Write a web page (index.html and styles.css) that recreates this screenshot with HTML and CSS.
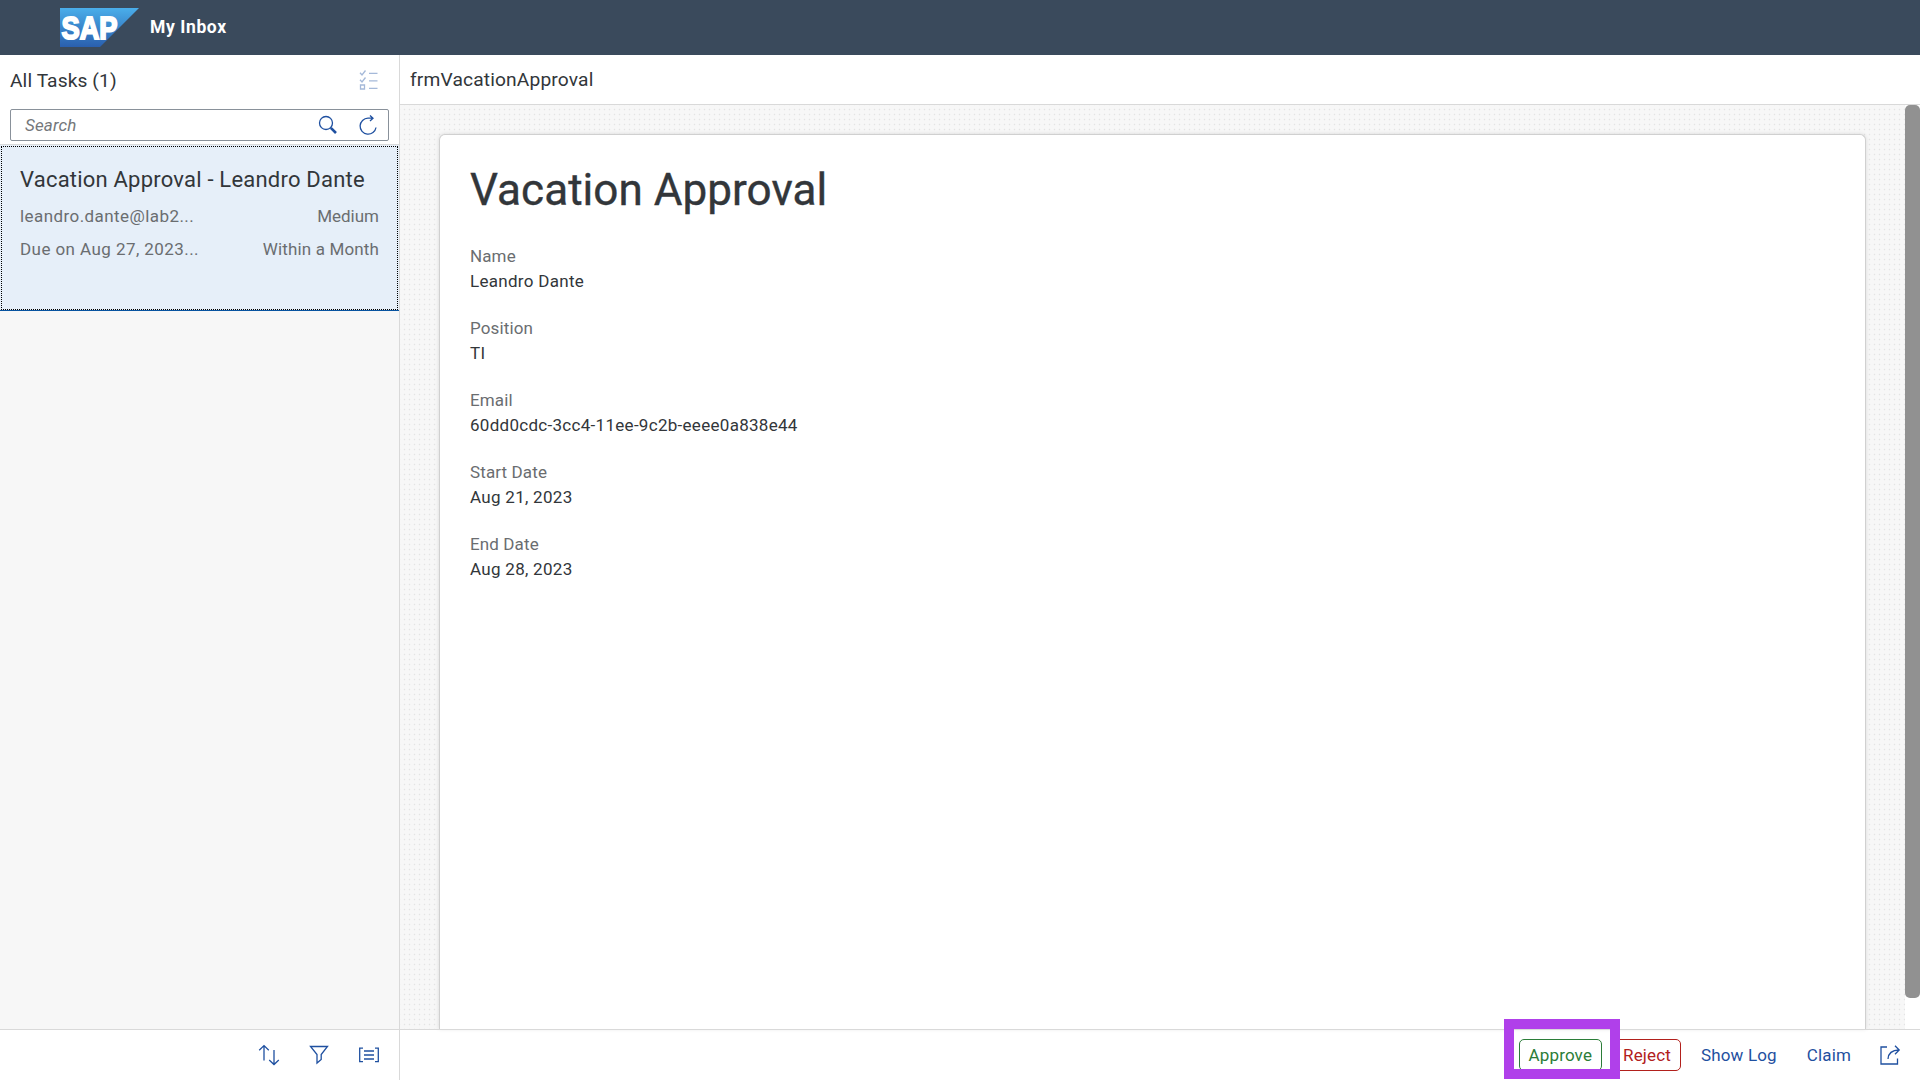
FILE: index.html
```html
<!DOCTYPE html>
<html lang="en">
<head>
<meta charset="utf-8">
<title>My Inbox</title>
<link rel="stylesheet" href="styles.css">
</head>
<body>
<header class="shell">
  <svg class="logo" width="79" height="39" viewBox="0 0 79 39" role="img" aria-label="SAP">
    <defs><linearGradient id="sap" x1="0" y1="0" x2="0" y2="1"><stop offset="0" stop-color="#4aaeea"/><stop offset="1" stop-color="#2a5fae"/></linearGradient></defs>
    <path d="M0 0H79L40 39H0Z" fill="url(#sap)"/>
    <text class="logo-text" x="1.5" y="30.500" textLength="56" lengthAdjust="spacingAndGlyphs">SAP</text>
  </svg>
  <h1 class="shell-title">My Inbox</h1>
</header>
<div class="app">
  <aside class="master">
    <div class="master-head">
      <h2 class="master-title">All Tasks (1)</h2>
      <svg class="icon icon-muted" width="20" height="20" viewBox="0 0 20 20"><path d="M1 2.8 3 5 6.5.5M1 9.8 3 12 6.5 7.5M1.500 15h4v4h-4zM10 3.3h8.500M10 10.8h8.500M10 18.3h8.500"/></svg>
    </div>
    <div class="search">
      <span class="search-hint">Search</span>
      <svg class="icon" width="20" height="20" viewBox="0 0 20 20"><circle cx="8" cy="8" r="6.5"/><path class="thick" d="m12.8 12.8 5.2 5.2"/></svg>
      <svg class="icon" width="20" height="20" viewBox="0 0 20 20"><path d="M15 3.200H10a8 8 0 1 0 8 9.300M12 .5 15 3.2 12 6"/></svg>
    </div>
    <div class="list">
      <div class="task">
        <div class="task-title">Vacation Approval - Leandro Dante</div>
        <div class="task-row"><span class="wide">leandro.dante@lab2...</span><span>Medium</span></div>
        <div class="task-row"><span class="wide">Due on Aug 27, 2023...</span><span class="snug">Within a Month</span></div>
      </div>
    </div>
    <footer class="master-foot">
      <svg class="icon" width="20" height="20" viewBox="0 0 20 20"><path d="M5 15.5V.8M.2 5.2 5 .6 9.8 5.2M15 5v14.5M10.2 15 15 19.5 19.8 15"/></svg>
      <svg class="icon" width="20" height="20" viewBox="0 0 20 20"><path d="M1.5 1.5h17l-6.3 8v5L8 18V9.500Z"/></svg>
      <svg class="icon" width="20" height="20" viewBox="0 0 20 20"><path d="M4 3.200H.7v13.500H4M16 3.200h3.300v13.500H16M5 6h10M5 10h10M5 14h10"/></svg>
    </footer>
  </aside>
  <main class="detail">
    <div class="detail-head">frmVacationApproval</div>
    <div class="detail-body">
      <div class="canvas">
        <section class="card">
          <h2 class="card-title">Vacation Approval</h2>
          <dl class="fields">
            <div class="field"><dt>Name</dt><dd>Leandro Dante</dd></div>
            <div class="field"><dt>Position</dt><dd>TI</dd></div>
            <div class="field"><dt>Email</dt><dd>60dd0cdc-3cc4-11ee-9c2b-eeee0a838e44</dd></div>
            <div class="field"><dt>Start Date</dt><dd>Aug 21, 2023</dd></div>
            <div class="field"><dt>End Date</dt><dd>Aug 28, 2023</dd></div>
          </dl>
        </section>
      </div>
      <div class="track"><div class="thumb"></div></div>
    </div>
    <footer class="detail-foot">
      <div class="approve-wrap"><button class="btn approve">Approve</button><span class="marker"></span></div>
      <button class="btn reject">Reject</button>
      <button class="btn plain">Show Log</button>
      <button class="btn plain">Claim</button>
      <svg class="icon share" width="20" height="20" viewBox="0 0 20 20"><path d="M7 2H1v17h16.500v-5.500M8 14c.3-5 3-8.800 11-9M15 .8 19.200 5 15 9.200"/></svg>
    </footer>
  </main>
</div>
</body>
</html>
```
FILE: styles.css
```css
* { box-sizing: border-box; }
body {
  margin: 0;
  height: 100vh;
  display: flex;
  flex-direction: column;
  overflow: hidden;
  font-family: Roboto, "Liberation Sans", sans-serif;
  font-size: 17px;
  color: #32363a;
  background: #fff;
}
h1, h2, dl, dd { margin: 0; font-weight: 400; }

.shell {
  flex: 0 0 55px;
  display: flex;
  align-items: center;
  gap: 11px;
  padding-left: 60px;
  background: #3a4a5c;
}
.logo { display: block; }
.logo-text { font-family: "Liberation Sans", sans-serif; font-weight: 700; font-size: 32px; fill: #fff; stroke: #fff; stroke-width: 2px; }
.shell-title { font-size: 17.5px; font-weight: 700; letter-spacing: .6px; padding-bottom: 2px; color: #fff; }

.app { flex: 1; display: flex; min-height: 0; }

.icon { flex: none; fill: none; stroke: #1f50a0; stroke-width: 1.3; overflow: visible; }
.icon-muted { stroke: #a5b9d9; }
.thick { stroke-width: 2.6; }

.master { flex: 0 0 400px; display: flex; flex-direction: column; border-right: 1px solid #d9d9d9; }
.master-head { height: 50px; display: flex; align-items: center; justify-content: space-between; padding: 0 20px 0 10px; }
.master-title { font-size: 19.2px; letter-spacing: .1px; }
.search {
  height: 32px;
  margin: 4px 10px 3px;
  padding: 0 10px 0 14px;
  display: flex;
  align-items: center;
  gap: 20px;
  border: 1px solid #89919a;
  border-radius: 2px;
}
.search-hint { flex: 1; font-style: italic; letter-spacing: .15px; color: #74777a; }
.list { flex: 1; border-top: 1px solid #d9d9d9; background: #f7f7f7; }
.task {
  position: relative;
  height: 166px;
  padding: 19px 20px 0 20px;
  background: #e6eff9;
  border-bottom: 1px solid #0854a0;
}
.task::after { content: ""; position: absolute; inset: 1px 1px 0 1px; border: 1px dotted #000; }
.task-title { font-size: 22px; line-height: 32px; letter-spacing: .21px; white-space: nowrap; margin-bottom: 4px; }
.task-row { display: flex; justify-content: space-between; line-height: 33px; color: #6a6d70; }
.wide { letter-spacing: .43px; }
.snug { letter-spacing: .15px; }
.master-foot {
  height: 51px;
  border-top: 1px solid #d9d9d9;
  display: flex;
  align-items: center;
  justify-content: flex-end;
  gap: 30px;
  padding-right: 20px;
}

.detail { flex: 1; display: flex; flex-direction: column; min-width: 0; }
.detail-head { flex: 0 0 50px; padding: 1px 0 0 10px; line-height: 48px; font-size: 19.2px; letter-spacing: .15px; border-bottom: 1px solid #d9d9d9; }
.detail-body { flex: 1; display: flex; min-height: 0; }
.canvas {
  flex: 1;
  padding: 29px 39px 0;
  background: radial-gradient(circle at 2.5px 2.5px, #e4e4e4 0, #e4e4e4 .6px, #f7f7f7 1.1px) 2px 2px / 5px 5px;
}
.card {
  height: 100%;
  padding: 25px 30px 0;
  background: #fff;
  border: 1px solid #d0d0d0;
  border-bottom: 0;
  border-radius: 6px 6px 0 0;
  box-shadow: 0 0 4px rgba(0, 0, 0, .12);
}
.card-title { font-size: 44px; line-height: 60px; letter-spacing: .05px; -webkit-text-stroke: .4px #32363a; }
.fields { padding-top: 24px; }
.field { height: 72px; line-height: 25px; }
dt { color: #6a6d70; letter-spacing: .12px; }
dd { letter-spacing: .29px; }
.track { flex: 0 0 15px; background: #fff; }
.thumb { height: 893px; border-radius: 5px; background: #919191; }

.detail-foot {
  flex: 0 0 51px;
  border-top: 1px solid #d9d9d9;
  display: flex;
  align-items: center;
  justify-content: flex-end;
  padding-right: 20px;
}
.btn {
  height: 32px;
  padding: 0 9px;
  border: 1px solid transparent;
  border-radius: 5px;
  background: #fff;
  font: inherit;
  letter-spacing: .15px;
}
.approve-wrap { position: relative; margin-right: 11px; }
.approve { color: #2b7d38; border-color: #2b7d38; display: block; }
.reject { color: #b2201c; border-color: #b2201c; margin-right: 10px; }
.plain { color: #1f50a0; margin-right: 10px; }
.share { margin-left: 9px; }
.marker { position: absolute; left: -15px; top: -20px; width: 116px; height: 60px; border: 10px solid #b040ea; }
```
